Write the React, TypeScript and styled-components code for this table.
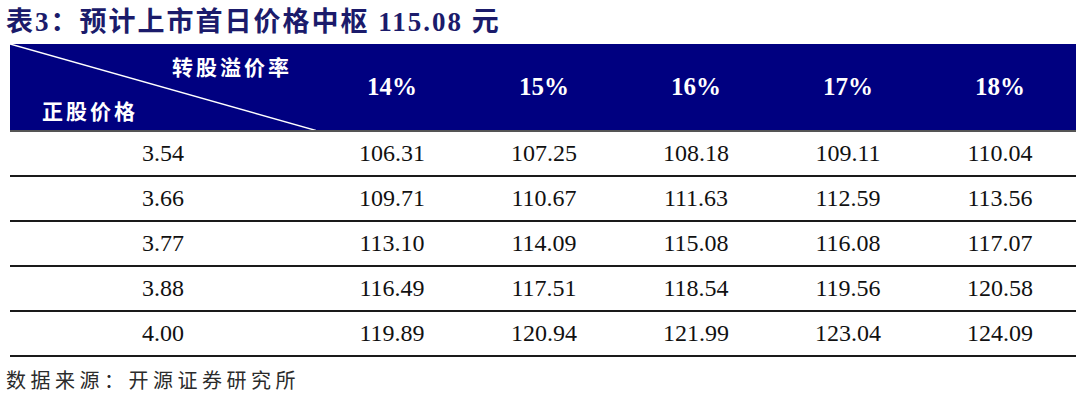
import React from "react";
import styled, { createGlobalStyle } from "styled-components";

const GlobalStyle = createGlobalStyle`
  body {
    margin: 0;
    background: #ffffff;
  }
`;

const Page = styled.div`
  width: 1080px;
  height: 401px;
  padding: 7px 0 0 10px;
  box-sizing: border-box;
  font-family: "Liberation Serif", "Noto Sans CJK SC", serif;
`;

const Title = styled.h1`
  margin: 0 0 7px -4px;
  height: 30px;
  font-size: 27px;
  line-height: 30px;
  letter-spacing: 2px;
  font-weight: bold;
  color: #1b1b6b;
  font-family: "Liberation Serif", "Noto Sans CJK SC", serif;
`;

const Grid = styled.div`
  display: grid;
  grid-template-columns: 306px repeat(5, 152px);
  width: 1066px;
`;

const HeadCell = styled.div`
  height: 86px;
  background: #000080;
  border-bottom: 2px solid #555;
  display: flex;
  align-items: center;
  justify-content: center;
  color: #ffffff;
  font-size: 25px;
  font-weight: bold;
`;

const CornerCell = styled(HeadCell)`
  position: relative;
  display: block;
`;

const CornerText = styled.span<{ $top: number; $left: number }>`
  position: absolute;
  top: ${(p) => p.$top}px;
  left: ${(p) => p.$left}px;
  font-family: "Noto Sans CJK SC", sans-serif;
  font-size: 21px;
  letter-spacing: 3px;
  line-height: 24px;
  font-weight: bold;
`;

const Diagonal = styled.svg`
  position: absolute;
  inset: 0;
`;

const Cell = styled.div`
  height: 43px;
  border-bottom: 2px solid #1a1a1a;
  display: flex;
  align-items: center;
  justify-content: center;
  font-size: 24px;
  color: #111;
`;

const Source = styled.div`
  margin: 8px 0 0 -4px;
  font-family: "Noto Sans CJK SC", sans-serif;
  font-size: 20px;
  letter-spacing: 4.5px;
  color: #2b2b2b;
`;

const rates = ["14%", "15%", "16%", "17%", "18%"];

const rows: [string, string[]][] = [
  ["3.54", ["106.31", "107.25", "108.18", "109.11", "110.04"]],
  ["3.66", ["109.71", "110.67", "111.63", "112.59", "113.56"]],
  ["3.77", ["113.10", "114.09", "115.08", "116.08", "117.07"]],
  ["3.88", ["116.49", "117.51", "118.54", "119.56", "120.58"]],
  ["4.00", ["119.89", "120.94", "121.99", "123.04", "124.09"]],
];

const App = () => {
  return (
    <Page>
      <GlobalStyle />
      <Title>表3：预计上市首日价格中枢 115.08 元</Title>
      <Grid>
        <CornerCell>
          <Diagonal width="306" height="86">
            <line x1="0" y1="0" x2="308" y2="87" stroke="#ffffff" strokeWidth="1.5" />
          </Diagonal>
          <CornerText $top={10} $left={162}>转股溢价率</CornerText>
          <CornerText $top={54} $left={32}>正股价格</CornerText>
        </CornerCell>
        {rates.map((r) => (
          <HeadCell key={r}>{r}</HeadCell>
        ))}
        {rows.map(([price, vals]) => (
          <React.Fragment key={price}>
            <Cell>{price}</Cell>
            {vals.map((v, i) => (
              <Cell key={i}>{v}</Cell>
            ))}
          </React.Fragment>
        ))}
      </Grid>
      <Source>数据来源：开源证券研究所</Source>
    </Page>
  );
};

export default App;
